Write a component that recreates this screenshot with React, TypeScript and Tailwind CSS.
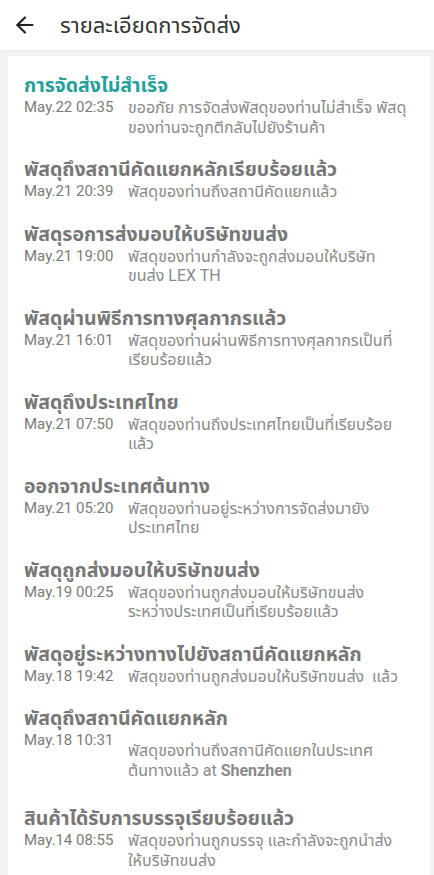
import React from 'react';
import { ArrowLeft } from 'lucide-react';

type Step = {
    title: string;
    time: string;
    lines: React.ReactNode[];
    active?: boolean;
    detailOffset?: boolean;
};

// lines are broken where the app breaks them
const steps: Step[] = [
    {
        title: 'การจัดส่งไม่สำเร็จ',
        time: 'May.22 02:35',
        lines: ['ขออภัย การจัดส่งพัสดุของท่านไม่สำเร็จ พัสดุ', 'ของท่านจะถูกตีกลับไปยังร้านค้า'],
        active: true,
    },
    { title: 'พัสดุถึงสถานีคัดแยกหลักเรียบร้อยแล้ว', time: 'May.21 20:39', lines: ['พัสดุของท่านถึงสถานีคัดแยกแล้ว'] },
    { title: 'พัสดุรอการส่งมอบให้บริษัทขนส่ง', time: 'May.21 19:00', lines: ['พัสดุของท่านกำลังจะถูกส่งมอบให้บริษัท', 'ขนส่ง LEX TH'] },
    { title: 'พัสดุผ่านพิธีการทางศุลกากรแล้ว', time: 'May.21 16:01', lines: ['พัสดุของท่านผ่านพิธีการทางศุลกากรเป็นที่', 'เรียบร้อยแล้ว'] },
    { title: 'พัสดุถึงประเทศไทย', time: 'May.21 07:50', lines: ['พัสดุของท่านถึงประเทศไทยเป็นที่เรียบร้อย', 'แล้ว'] },
    { title: 'ออกจากประเทศต้นทาง', time: 'May.21 05:20', lines: ['พัสดุของท่านอยู่ระหว่างการจัดส่งมายัง', 'ประเทศไทย'] },
    { title: 'พัสดุถูกส่งมอบให้บริษัทขนส่ง', time: 'May.19 00:25', lines: ['พัสดุของท่านถูกส่งมอบให้บริษัทขนส่ง', 'ระหว่างประเทศเป็นที่เรียบร้อยแล้ว'] },
    { title: 'พัสดุอยู่ระหว่างทางไปยังสถานีคัดแยกหลัก', time: 'May.18 19:42', lines: ['พัสดุของท่านถูกส่งมอบให้บริษัทขนส่ง  แล้ว'] },
    {
        title: 'พัสดุถึงสถานีคัดแยกหลัก',
        time: 'May.18 10:31',
        lines: [
            'พัสดุของท่านถึงสถานีคัดแยกในประเทศ',
            <>
                ต้นทางแล้ว at <span className="font-bold">Shenzhen</span>
            </>,
        ],
        detailOffset: true,
    },
    { title: 'สินค้าได้รับการบรรจุเรียบร้อยแล้ว', time: 'May.14 08:55', lines: ['พัสดุของท่านถูกบรรจุ และกำลังจะถูกนำส่ง', 'ให้บริษัทขนส่ง'] },
];

export default function App() {
    return (
        <div className="min-h-[875px] bg-[#f3f3f3] font-['Roboto','Noto_Sans','Noto_Sans_Thai',sans-serif]">
            {/* Header */}
            <div className="flex h-[50px] items-center bg-white pl-3 shadow-[0_1px_3px_rgba(0,0,0,0.06)]">
                <ArrowLeft size={26} strokeWidth={2} className="text-[#222]" />
                <span className="ml-[22px] text-[22px] text-[#333]">รายละเอียดการจัดส่ง</span>
            </div>

            {/* Tracking card */}
            <div className="ml-2 mr-1 mt-[6px] bg-white px-4 pb-6 pt-[18px]">
                {steps.map((s, i) => (
                    <div key={i} className={i === 0 ? '' : steps[i - 1].detailOffset ? 'mt-[27px]' : 'mt-[21px]'}>
                        <div className={`text-[19.5px] font-bold leading-[24px] ${s.active ? 'text-[#26a09a]' : 'text-[#777]'}`}>
                            {s.title}
                        </div>
                        <div className="flex leading-[19.5px]">
                            <span className="w-[104px] shrink-0 text-[15px] text-[#7b7b7b]">{s.time}</span>
                            <div className={`flex-1 text-[16px] text-[#8a8a8a] ${s.detailOffset ? 'mt-[10px]' : ''}`}>
                                {s.lines.map((l, j) => (
                                    <div key={j} className="whitespace-pre">
                                        {l}
                                    </div>
                                ))}
                            </div>
                        </div>
                    </div>
                ))}
            </div>
        </div>
    );
}
